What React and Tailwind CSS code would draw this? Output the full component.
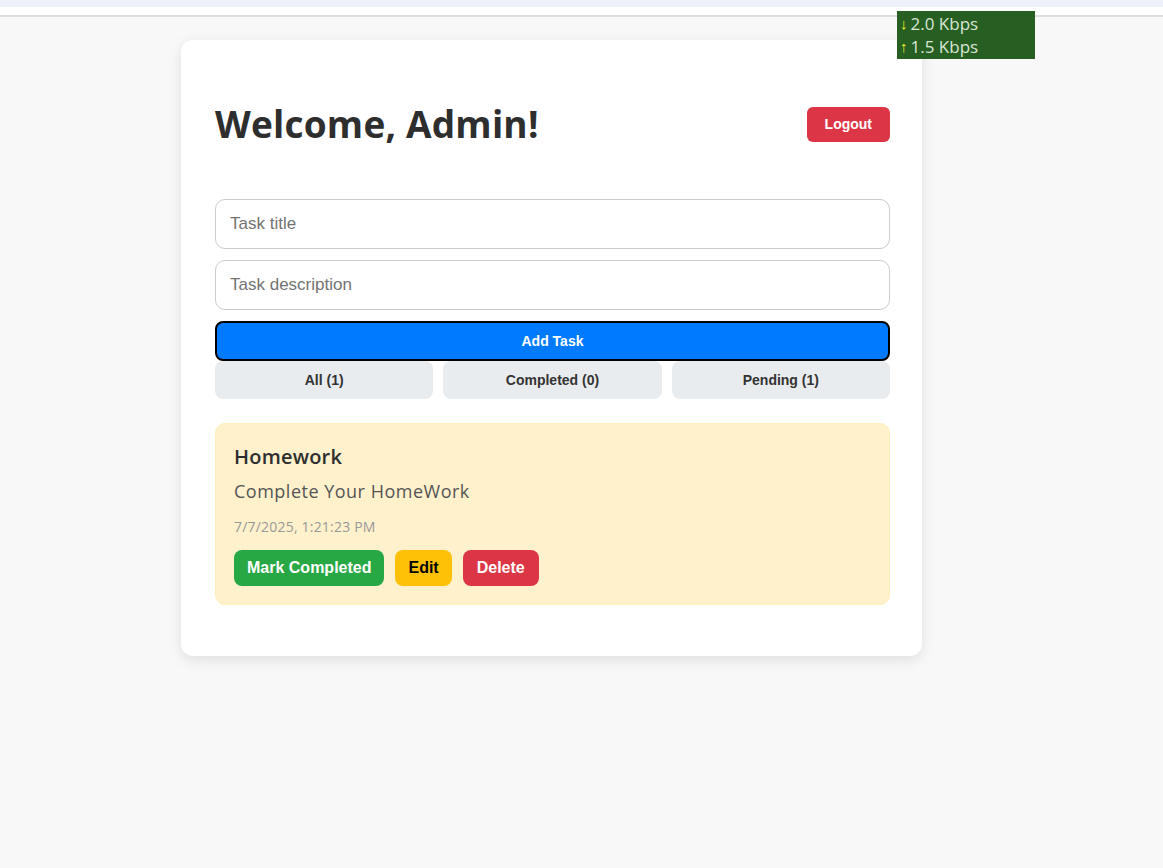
import React, { useState } from 'react';

const heading = { fontFamily: '"Open Sans", "Noto Sans", sans-serif' };

const tasks = [
  {
    id: 1,
    title: 'Homework',
    description: 'Complete Your HomeWork',
    createdAt: '7/7/2025, 1:21:23 PM',
    completed: false,
  },
];

const App = () => {
  const [filter, setFilter] = useState('all');
  const done = tasks.filter((t) => t.completed).length;

  return (
    <div className="min-h-[868px] bg-[#f8f8f8] relative font-['Liberation_Sans',Arial,sans-serif]">
      {/* browser strip */}
      <div className="h-[7px] bg-[#edf1f9]" />
      <div className="h-[8px] bg-white" />
      <div className="h-[2px] bg-[#dedede]" />

      {/* network meter overlay */}
      <div className="absolute left-[897px] top-[11px] w-[138px] h-[48px] bg-[#265f21] pl-[3px] pt-[1px] text-[17px] leading-[23px] text-[#d9e6d5] font-['Open_Sans',sans-serif]">
        <div className="flex items-center gap-[3px]"><span className="text-[#f5f02a] text-[15px] font-bold">↓</span>2.0 Kbps</div>
        <div className="flex items-center gap-[3px]"><span className="text-[#f5f02a] text-[15px] font-bold">↑</span>1.5 Kbps</div>
      </div>

      <div className="flex justify-center pt-[23px] pr-[60px]">
        <div className="w-[741px] bg-white rounded-[12px] shadow-[0_4px_14px_rgba(0,0,0,0.1)] pl-[34px] pr-[32px] pt-[60px] pb-[51px]">
          {/* Header */}
          <div className="flex items-center justify-between">
            <h1 style={heading} className="text-[37px] leading-[48px] font-bold text-[#2e2e2e] tracking-[0.2px]">Welcome, Admin!</h1>
            <button className="h-[35px] px-[18px] bg-[#dc3545] text-white text-[14px] font-bold rounded-[6px]">Logout</button>
          </div>

          {/* Form */}
          <div className="mt-[51px] flex flex-col gap-[11px]">
            <input
              placeholder="Task title"
              className="h-[50px] w-full border border-[#cccccc] rounded-[10px] px-[14px] text-[17px] placeholder-[#737373] outline-none"
            />
            <input
              placeholder="Task description"
              className="h-[50px] w-full border border-[#cccccc] rounded-[10px] px-[14px] text-[17px] placeholder-[#737373] outline-none"
            />
            <button className="h-[40px] w-full bg-[#007bff] border-2 border-black rounded-[8px] text-white text-[14px] font-bold">Add Task</button>
          </div>

          {/* Filters */}
          <div className="grid grid-cols-3 gap-[10px]">
            {[
              ['all', `All (${tasks.length})`],
              ['completed', `Completed (${done})`],
              ['pending', `Pending (${tasks.length - done})`],
            ].map(([key, label]) => (
              <button
                key={key}
                onClick={() => setFilter(key)}
                className="h-[38px] bg-[#e9ecef] rounded-[8px] text-[14px] font-bold text-[#333333]"
              >
                {label}
              </button>
            ))}
          </div>

          {/* Task list */}
          <div className="mt-[24px]">
            {tasks.map((task) => (
              <div key={task.id} className="bg-[#fff1cc] border border-[#ffeeba] rounded-[10px] px-[18px] pt-[19px] pb-[18px]">
                <h3 style={heading} className="text-[20px] leading-[28px] font-semibold text-[#2e2e2e] tracking-[0.2px]">{task.title}</h3>
                <p style={heading} className="mt-[7px] text-[18px] leading-[26px] text-[#555555] tracking-[0.5px]">{task.description}</p>
                <p style={heading} className="mt-[13px] text-[14px] leading-[20px] text-[#999999] tracking-[0.2px]">{task.createdAt}</p>
                <div className="mt-[13px] flex gap-[11px] text-[16px] font-bold">
                  <button className="h-[36px] px-[13px] bg-[#28a745] text-white rounded-[8px]">Mark Completed</button>
                  <button className="h-[36px] px-[13px] bg-[#ffc107] text-black rounded-[8px]">Edit</button>
                  <button className="h-[36px] px-[14px] bg-[#dc3545] text-white rounded-[8px]">Delete</button>
                </div>
              </div>
            ))}
          </div>
        </div>
      </div>
    </div>
  );
};

export default App;
